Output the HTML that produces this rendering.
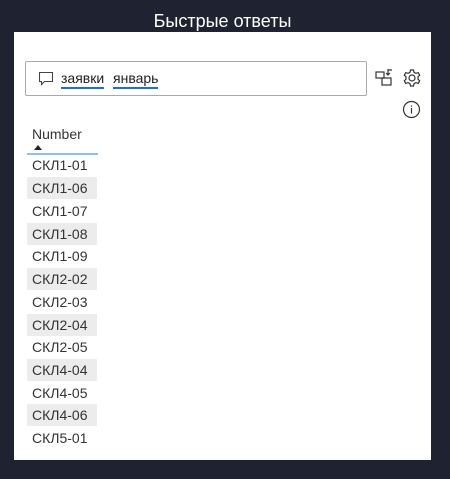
<!DOCTYPE html><html><head><style>
body{margin:0;width:450px;height:479px;background:#1f2331;position:relative;overflow:hidden;font-family:"Liberation Sans","DejaVu Sans",sans-serif}
.t{position:absolute;top:11px;left:0;width:445px;text-align:center;color:#fff;font-size:18px}
.p{position:absolute;left:14px;top:32px;width:417px;height:428px;background:#fff}
.s{position:absolute;left:25px;top:61px;width:340px;height:33px;border:1px solid #a9a9a9;border-radius:2px}
.s span{position:absolute;top:8px;font-size:14px;color:#222;border-bottom:2px solid #1a73c8;line-height:17px}
.r{position:absolute;left:27px;width:70px;height:22px;font-size:14px;color:#333;line-height:22px;padding-left:5px;box-sizing:border-box}
.g{background:#ececec}
</style></head><body>
<div class="t">Быстрые ответы</div>
<div class="p"></div>
<div class="s">
<svg style="position:absolute;left:12px;top:9px" width="16" height="15" viewBox="0 0 16 15"><path d="M1.5 1.5h13v9h-8l-3 3v-3h-2z" fill="none" stroke="#444" stroke-width="1.1"/></svg>
<span style="left:35px">заявки</span><span style="left:87px">январь</span></div>
<svg style="position:absolute;left:375px;top:67px" width="20" height="20" viewBox="0 0 20 20" fill="none" stroke="#333" stroke-width="1.2"><rect x="1" y="5" width="8" height="6"/><rect x="7" y="11" width="9" height="7"/><path d="M13 2v6M11 6l2 2 2-2M13 3h4"/></svg>
<svg style="position:absolute;left:402px;top:68px" width="20" height="20" viewBox="0 0 20 20" fill="none" stroke="#333" stroke-width="1.2"><circle cx="10" cy="10" r="3"/><path d="M8.5 2h3l.5 2.3 2 1.1 2.2-.8 1.5 2.6-1.7 1.6v2.4l1.7 1.6-1.5 2.6-2.2-.8-2 1.1-.5 2.3h-3l-.5-2.3-2-1.1-2.2.8-1.5-2.6 1.7-1.6V8.8L2.3 7.2l1.5-2.6 2.2.8 2-1.1z"/></svg>
<svg style="position:absolute;left:402px;top:100px" width="19" height="19" viewBox="0 0 19 19" fill="none" stroke="#333" stroke-width="1.2"><circle cx="9.5" cy="9.5" r="8"/><path d="M9.5 8v5.5M9.5 5.5v1.2"/></svg>
<div style="position:absolute;left:32px;top:126px;font-size:14px;color:#333">Number</div>
<div style="position:absolute;left:34px;top:145px;width:0;height:0;border-left:4px solid transparent;border-right:4px solid transparent;border-bottom:5px solid #222"></div>
<div style="position:absolute;left:27px;top:153px;width:71px;height:2px;background:#8cc3e8"></div>
<div class="r" style="top:154px">СКЛ1-01</div>
<div class="r g" style="top:177px">СКЛ1-06</div>
<div class="r" style="top:200px">СКЛ1-07</div>
<div class="r g" style="top:223px">СКЛ1-08</div>
<div class="r" style="top:245px">СКЛ1-09</div>
<div class="r g" style="top:268px">СКЛ2-02</div>
<div class="r" style="top:291px">СКЛ2-03</div>
<div class="r g" style="top:314px">СКЛ2-04</div>
<div class="r" style="top:336px">СКЛ2-05</div>
<div class="r g" style="top:359px">СКЛ4-04</div>
<div class="r" style="top:382px">СКЛ4-05</div>
<div class="r g" style="top:404px">СКЛ4-06</div>
<div class="r" style="top:427px">СКЛ5-01</div>
</body></html>
